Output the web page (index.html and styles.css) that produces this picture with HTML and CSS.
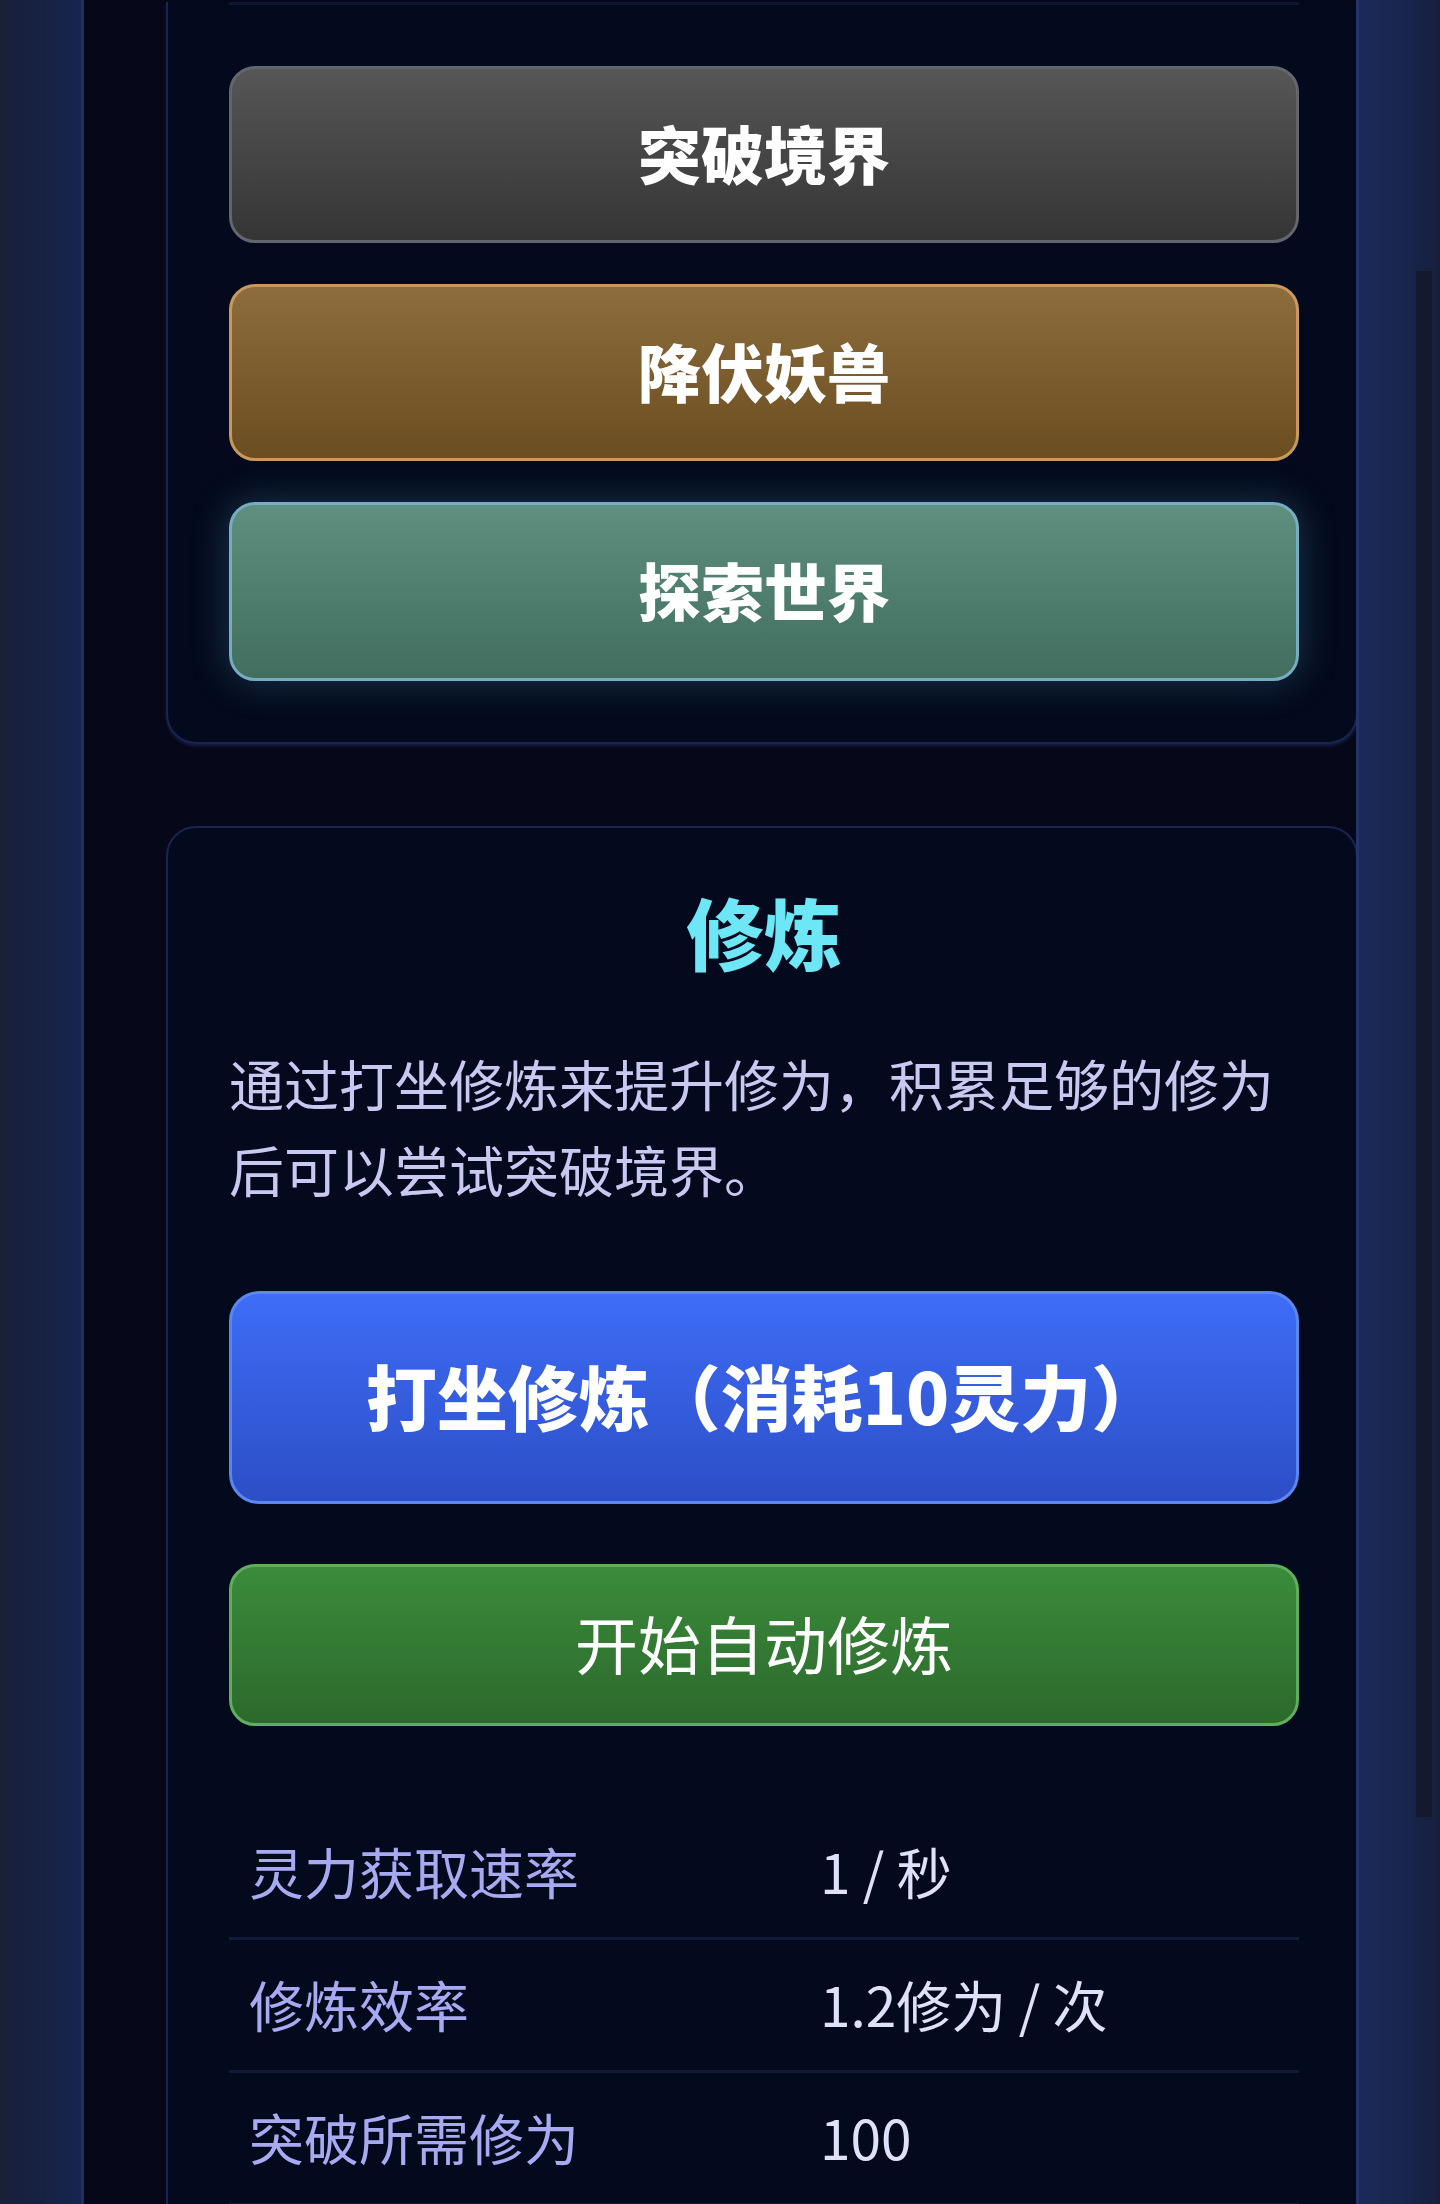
FILE: index.html
```html
<!DOCTYPE html>
<html lang="zh-CN">
<head>
<meta charset="utf-8">
<title>修炼</title>
<link rel="stylesheet" href="styles.css">
</head>
<body>
<div class="page">
  <aside class="side side-left"></aside>
  <main class="main">
    <section class="card card-top">
      <div class="divider"></div>
      <div class="actions">
        <button class="btn btn-gray">突破境界</button>
        <button class="btn btn-brown">降伏妖兽</button>
        <button class="btn btn-teal">探索世界</button>
      </div>
    </section>
    <section class="card card-cult">
      <h2 class="title">修炼</h2>
      <p class="desc">通过打坐修炼来提升修为，积累足够的修为后可以尝试突破境界。</p>
      <button class="btn btn-blue">打坐修炼（消耗10灵力）</button>
      <button class="btn btn-green">开始自动修炼</button>
      <div class="stats">
        <div class="row"><span class="label">灵力获取速率</span><span class="value">1 / 秒</span></div>
        <div class="row"><span class="label">修炼效率</span><span class="value">1.2修为 / 次</span></div>
        <div class="row"><span class="label">突破所需修为</span><span class="value">100</span></div>
      </div>
    </section>
  </main>
  <aside class="side side-right"><div class="track"></div></aside>
</div>
</body>
</html>
```

FILE: styles.css
```css
* { box-sizing: border-box; }
html, body { margin: 0; padding: 0; }
body {
  background: #060819;
  font-family: "Noto Sans CJK SC", "Noto Sans", sans-serif;
  color: #fff;
}
.page {
  display: grid;
  grid-template-columns: 84px 1272px 84px;
  width: 1440px;
  height: 2204px;
  overflow: hidden;
}
.side-left {
  background: linear-gradient(to right, #1a1f3a 0%, #172244 60%, #162550 100%);
  border-right: 3px solid #22305f;
}
.side-right {
  background: linear-gradient(to right, #1a2a58 0%, #19264f 50%, #171f3c 100%);
  border-left: 3px solid #24336a;
  display: flex;
  justify-content: flex-end;
  padding-top: 271px;
  padding-right: 8px;
}
.track {
  width: 16px;
  height: 1546px;
  background: #131a2e;
}
.main {
  padding-left: 82px;
  background: #060819;
}
.card {
  background: #040a1d;
  border: 2px solid #1a2450;
  border-radius: 30px;
  padding: 0 57px 0 61px;
  margin-right: -2px;
}
.card-top {
  border-top: 0;
  border-radius: 0 0 30px 30px;
  padding-bottom: 61px;
  box-shadow: 0 2px 3px rgba(30, 44, 100, 0.6);
}
.divider {
  margin-top: 2px;
  height: 3px;
  background: #0d1733;
}
.actions {
  margin-top: 61px;
  display: flex;
  flex-direction: column;
  gap: 41px;
}
.btn {
  display: flex;
  align-items: center;
  justify-content: center;
  width: 100%;
  border-radius: 26px;
  border: 3px solid transparent;
  font-family: "Noto Sans CJK SC", sans-serif;
  color: #fff;
  padding: 0 0 7px;
  cursor: pointer;
}
.actions .btn {
  height: 177px;
  font-size: 63px;
  font-weight: 900;
  line-height: 1;
}
.btn-gray {
  background: linear-gradient(to bottom, #565656, #353535);
  border-color: #63666e;
}
.btn-brown {
  background: linear-gradient(to bottom, #8d6d3d, #6a4d20);
  border-color: #c9985c;
}
.btn-teal {
  height: 179px !important;
  background: linear-gradient(to bottom, #5f8f7f, #416e5e);
  border-color: #74aec0;
  box-shadow: 0 0 38px rgba(90, 170, 210, 0.28);
}
.card-cult {
  margin-top: 82px;
  padding-top: 56px;
  padding-bottom: 0;
  min-height: 1500px;
}
.title {
  margin: 0;
  text-align: center;
  font-size: 78px;
  line-height: 94px;
  font-weight: 900;
  color: #6de6f6;
}
.desc {
  margin: 61px 0 0;
  font-size: 55px;
  line-height: 86px;
  color: #c8c8f0;
}
.btn-blue {
  margin-top: 80px;
  height: 213px;
  font-size: 71px;
  font-weight: 900;
  line-height: 1;
  background: linear-gradient(to bottom, #3e6df7, #2c4ec6);
  border-color: #5b87ef;
  border-radius: 30px;
}
.btn-green {
  margin-top: 60px;
  height: 162px;
  font-size: 63px;
  font-weight: 400;
  line-height: 1;
  background: linear-gradient(to bottom, #3b8b3b, #2c692c);
  border-color: #5fae5f;
}
.stats {
  margin-top: 81px;
}
.row {
  display: grid;
  grid-template-columns: 571px 1fr;
  height: 133px;
  padding-bottom: 5px;
  border-bottom: 3px solid #111a38;
  align-items: center;
  font-size: 55px;
  line-height: 80px;
}
.label {
  padding-left: 20px;
  color: #a7a9f1;
}
.value {
  padding-left: 20px;
  color: #dfe0fa;
}
```
